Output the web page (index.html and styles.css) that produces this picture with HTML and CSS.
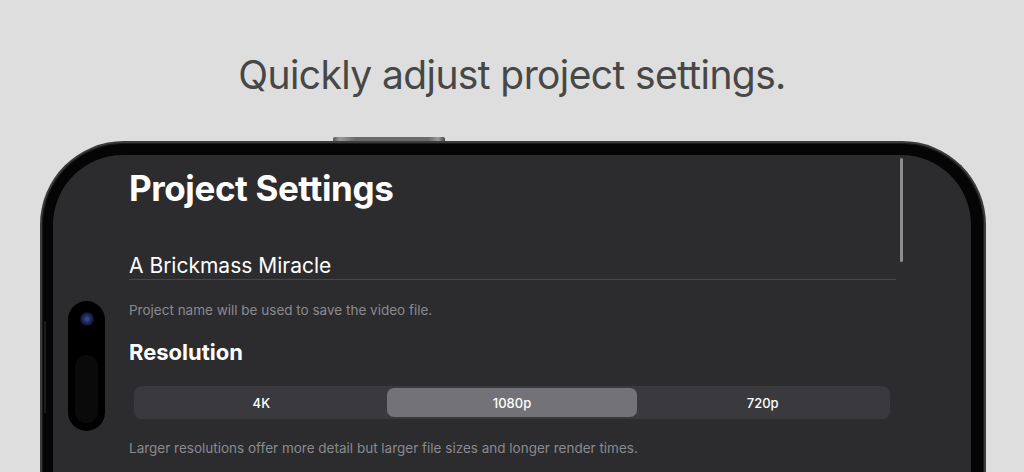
FILE: index.html
```html
<!DOCTYPE html>
<html>
<head lang="en">
    <meta charset="UTF-8">
    <meta name="viewport" content="width=device-width, initial-scale=1">
    <title>Project Settings</title>
    <link rel="stylesheet" href="styles.css">
</head>
<body>
    <h1 class="headline">Quickly adjust project settings.</h1>

    <div class="phone">
        <div class="phone-button"></div>
        <div class="side-button"></div>
        <div class="screen">
            <div class="island">
                <span class="lens"></span>
                <span class="sensor"></span>
            </div>
            <div class="scrollbar"></div>

            <h2 class="page-title">Project Settings</h2>

            <div class="name-field">A Brickmass Miracle</div>
            <p class="hint">Project name will be used to save the video file.</p>

            <h3 class="section-title">Resolution</h3>
            <div class="segmented">
                <button class="segment">4K</button>
                <button class="segment selected">1080p</button>
                <button class="segment">720p</button>
            </div>
            <p class="hint">Larger resolutions offer more detail but larger file sizes and longer render times.</p>
        </div>
    </div>
</body>
</html>
```

FILE: styles.css
```css
html, body{
    margin: 0;
    padding: 0;
    height: 100%;
    overflow: hidden;
}
body{
    background-color: #dedede;
    font-family: Inter, "Noto Sans", "Liberation Sans", sans-serif;
}
.headline{
    margin: 0;
    padding-top: 52px;
    height: 141px;
    box-sizing: border-box;
    text-align: center;
    font-size: 39px;
    line-height: 46px;
    font-weight: 400;
    letter-spacing: -0.6px;
    color: #474747;
}

.phone{
    position: relative;
    margin-left: 40px;
    width: 946px;
    height: 340px;
    box-sizing: border-box;
    padding: 12px 13px 0 11px;
    background-color: #050505;
    border: 2px solid #3b3b3c;
    border-bottom: none;
    border-radius: 84px 84px 0 0;
    box-shadow: inset 0 0 0 1px #1a1a1a;
}
.phone-button{
    position: absolute;
    top: -6px;
    left: 291px;
    width: 112px;
    height: 4px;
    border-radius: 2px 2px 0 0;
    background: linear-gradient(to right, #555 0%, #9a9a9a 6%, #6a6a6a 20%, #6a6a6a 85%, #9a9a9a 94%, #444 100%);
}
.side-button{
    position: absolute;
    left: 2px;
    top: 178px;
    width: 2px;
    height: 92px;
    background-color: #1c1c1c;
}
.screen{
    position: relative;
    height: 100%;
    box-sizing: border-box;
    padding: 13px 75px 0 76px;
    background-color: #2c2c2e;
    border-radius: 70px 70px 0 0;
    color: #ffffff;
}

.island{
    position: absolute;
    left: 15px;
    top: 146px;
    width: 37px;
    height: 130px;
    border-radius: 19px;
    background-color: #000000;
}
.lens{
    position: absolute;
    left: 12px;
    top: 11px;
    width: 14px;
    height: 14px;
    border-radius: 50%;
    background: radial-gradient(circle at 50% 50%, #3f4f95 0%, #1c2458 45%, #0a0c1a 75%);
}
.sensor{
    position: absolute;
    left: 7px;
    top: 54px;
    width: 23px;
    height: 68px;
    border-radius: 12px;
    background-color: #0a0a0b;
}
.scrollbar{
    position: absolute;
    right: 68px;
    top: 3px;
    width: 3px;
    height: 104px;
    border-radius: 2px;
    background-color: #8d8d90;
}

.page-title{
    margin: 0;
    font-size: 35px;
    line-height: 41px;
    font-weight: 700;
    letter-spacing: -0.4px;
}
.name-field{
    margin-top: 43px;
    padding-bottom: 0;
    font-size: 21px;
    line-height: 27px;
    font-weight: 400;
    border-bottom: 1px solid #48484a;
}
.hint{
    margin: 21px 0 0 0;
    font-size: 13.5px;
    line-height: 18px;
    color: #8a8a8e;
}
.section-title{
    margin: 19px 0 0 0;
    font-size: 22px;
    line-height: 28px;
    font-weight: 700;
}
.segmented{
    display: flex;
    margin: 20px 6px 0 5px;
    padding: 2px;
    height: 33px;
    box-sizing: border-box;
    border-radius: 8px;
    background-color: #3a3a3e;
}
.segment{
    flex: 1;
    border: none;
    border-radius: 7px;
    background: transparent;
    color: #ffffff;
    font-family: inherit;
    font-size: 13px;
    font-weight: 500;
}
.segment.selected{
    background-color: #737377;
}
.segmented + .hint{
    margin-top: 20px;
}
```
